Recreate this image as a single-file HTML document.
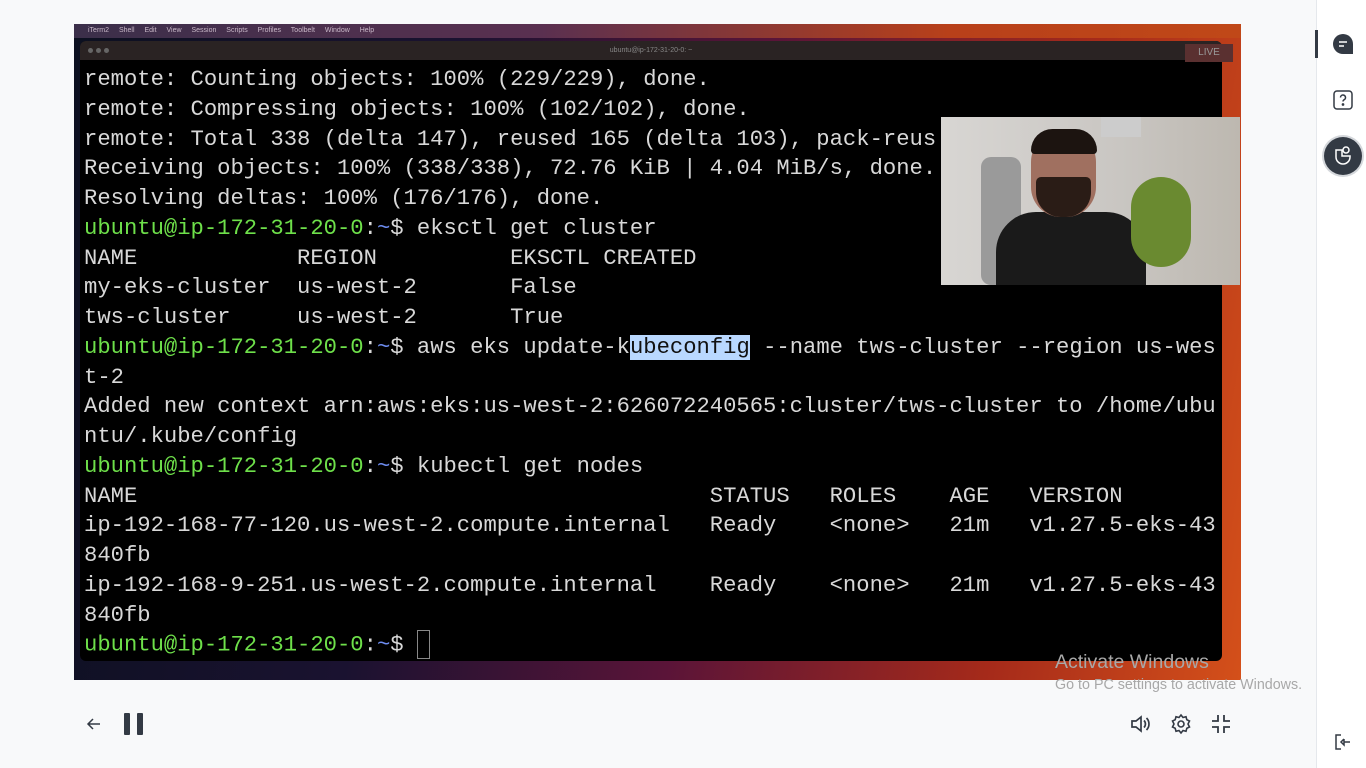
<!DOCTYPE html>
<html><head><meta charset="utf-8"><style>
*{margin:0;padding:0;box-sizing:border-box}
body{width:1366px;height:768px;overflow:hidden;background:#f8f9fa;font-family:"Liberation Sans",sans-serif;position:relative}
#vid{position:absolute;left:74px;top:24px;width:1167px;height:656px;overflow:hidden;
background:linear-gradient(100deg,#0c1020 0%,#1a1230 30%,#5a1438 55%,#a52a1a 80%,#d4501a 100%)}
#menu{position:absolute;left:0;top:0;width:100%;height:14px;background:linear-gradient(90deg,#3b2f4a,#5a3050 40%,#b8401a 75%,#c04818);font-size:7px;color:#c9b8c8;line-height:14px;padding-left:14px;word-spacing:8px}
#term{position:absolute;left:6px;top:17px;width:1142px;height:620px;background:#000;border-radius:6px;overflow:hidden}
#tbar{height:19px;background:#2a2323;color:#888;font-size:7px;text-align:center;line-height:19px}
#tbar i{position:absolute;left:8px;top:7px;width:5px;height:5px;border-radius:50%;background:#666;box-shadow:8px 0 #666,16px 0 #666}
pre{position:absolute;left:4px;top:24px;font-family:"Liberation Mono",monospace;font-size:22.2px;line-height:29.75px;color:#d8d8d8}
.g{color:#6ee04a}.b{color:#6d8cf0}.h{background:#b9d8ff;color:#111}
.cur{display:inline-block;width:13px;height:29px;border:1px solid #888;vertical-align:middle}
#cam{position:absolute;left:867px;top:93px;width:299px;height:168px;background:linear-gradient(90deg,#d8d6d3,#c9c6c2 60%,#bdb8b0);overflow:hidden}
#live{position:absolute;right:8px;top:20px;width:48px;height:18px;background:#5a3030;color:#999;font-size:10px;text-align:center;line-height:18px}
#side{position:absolute;left:1316px;top:0;width:50px;height:768px;background:#fff;border-left:1px solid #e5e8ec}
.aw{position:absolute;color:#a8a8a8;font-family:"Liberation Sans",sans-serif}
</style></head><body>
<div id="vid">
<div id="menu"> iTerm2 Shell Edit View Session Scripts Profiles Toolbelt Window Help</div>
<div id="term"><div id="tbar"><i></i>ubuntu@ip-172-31-20-0: ~</div>
<pre>remote: Counting objects: 100% (229/229), done.
remote: Compressing objects: 100% (102/102), done.
remote: Total 338 (delta 147), reused 165 (delta 103), pack-reus
Receiving objects: 100% (338/338), 72.76 KiB | 4.04 MiB/s, done.
Resolving deltas: 100% (176/176), done.
<span class="g">ubuntu@ip-172-31-20-0</span>:<span class="b">~</span>$ eksctl get cluster
NAME            REGION          EKSCTL CREATED
my-eks-cluster  us-west-2       False
tws-cluster     us-west-2       True
<span class="g">ubuntu@ip-172-31-20-0</span>:<span class="b">~</span>$ aws eks update-k<span class="h">ubeconfig</span> --name tws-cluster --region us-wes
t-2
Added new context arn:aws:eks:us-west-2:626072240565:cluster/tws-cluster to /home/ubu
ntu/.kube/config
<span class="g">ubuntu@ip-172-31-20-0</span>:<span class="b">~</span>$ kubectl get nodes
NAME                                           STATUS   ROLES    AGE   VERSION
ip-192-168-77-120.us-west-2.compute.internal   Ready    &lt;none&gt;   21m   v1.27.5-eks-43
840fb
ip-192-168-9-251.us-west-2.compute.internal    Ready    &lt;none&gt;   21m   v1.27.5-eks-43
840fb
<span class="g">ubuntu@ip-172-31-20-0</span>:<span class="b">~</span>$ <span class="cur"></span></pre>
</div>
<div id="live">LIVE</div>
<div id="cam">
<div style="position:absolute;left:40px;top:40px;width:40px;height:128px;background:#9a9a9a;border-radius:10px"></div>
<div style="position:absolute;left:55px;top:95px;width:150px;height:80px;background:#1a1a1a;border-radius:40px 40px 0 0"></div>
<div style="position:absolute;left:90px;top:15px;width:65px;height:85px;background:#a07060;border-radius:30px"></div>
<div style="position:absolute;left:90px;top:12px;width:66px;height:25px;background:#1c1410;border-radius:30px 30px 5px 5px"></div>
<div style="position:absolute;left:95px;top:60px;width:55px;height:40px;background:#2a1c16;border-radius:5px 5px 25px 25px"></div>
<div style="position:absolute;left:190px;top:60px;width:60px;height:90px;background:#6a8a30;border-radius:30px"></div>
<div style="position:absolute;left:160px;top:0;width:40px;height:20px;background:#ccc"></div>
</div>
</div>
<div class="aw" style="left:1055px;top:651px;font-size:19.5px">Activate Windows</div>
<div class="aw" style="left:1055px;top:677px;font-size:14.3px">Go to PC settings to activate Windows.</div>
<svg style="position:absolute;left:84px;top:714px" width="20" height="20" viewBox="0 0 20 20"><path d="M16 10H4M9 5L4 10L9 15" stroke="#333a44" stroke-width="1.5" fill="none"/></svg>
<div style="position:absolute;left:124px;top:713px;width:6px;height:22px;background:#333a44;border-radius:1px"></div>
<div style="position:absolute;left:137px;top:713px;width:6px;height:22px;background:#333a44;border-radius:1px"></div>
<svg style="position:absolute;left:1129px;top:712px" width="24" height="24" viewBox="0 0 24 24" fill="none" stroke="#333a44" stroke-width="1.7"><path d="M3 9h4l5-4v14l-5-4H3z"/><path d="M15 8.5a5 5 0 0 1 0 7M17.5 6a8.5 8.5 0 0 1 0 12"/></svg>
<svg style="position:absolute;left:1169px;top:712px" width="24" height="24" viewBox="0 0 24 24" fill="none" stroke="#333a44" stroke-width="1.6"><circle cx="12" cy="12" r="3"/><path d="M12 3l2 2.5 3-.8.8 3L20.5 9 19 12l1.5 3-2.7 1.3-.8 3-3-.8L12 21l-2-2.5-3 .8-.8-3L3.5 15 5 12 3.5 9l2.7-1.3.8-3 3 .8z"/></svg>
<svg style="position:absolute;left:1209px;top:712px" width="24" height="24" viewBox="0 0 24 24" fill="none" stroke="#333a44" stroke-width="1.8"><path d="M9 3v6H3M15 3v6h6M9 21v-6H3M15 21v-6h6"/></svg>
<div id="side">
<div style="position:absolute;left:-2px;top:30px;width:3px;height:28px;background:#333a44"></div>
<svg style="position:absolute;left:15px;top:33px" width="22" height="22" viewBox="0 0 22 22"><path d="M11 1a10 10 0 1 0 0 20h10V11A10 10 0 0 0 11 1z" fill="#333a44"/><path d="M7 9h8M7 13h5" stroke="#fff" stroke-width="1.6"/></svg>
<svg style="position:absolute;left:15px;top:89px" width="22" height="22" viewBox="0 0 22 22" fill="none" stroke="#333a44" stroke-width="1.5"><rect x="2" y="2" width="18" height="18" rx="3"/><path d="M8.5 8.5a2.5 2.5 0 1 1 3.5 2.3c-.7.4-1 .9-1 1.7"/><circle cx="11" cy="15.5" r=".6" fill="#333a44"/></svg>
<div style="position:absolute;left:7px;top:137px;width:38px;height:38px;border-radius:50%;background:#333a44;box-shadow:0 0 0 2px #d4d7db"></div>
<svg style="position:absolute;left:14px;top:144px" width="24" height="24" viewBox="0 0 24 24" fill="none" stroke="#fff" stroke-width="1.5"><path d="M5 6v7a7 7 0 0 0 14 0v-1H11V6z"/><circle cx="15" cy="6" r="3"/></svg>
<svg style="position:absolute;left:16px;top:732px" width="20" height="20" viewBox="0 0 20 20" fill="none" stroke="#333a44" stroke-width="1.5"><path d="M8 3H3v14h5"/><path d="M17 10h-6M11 7l-3 3 3 3v-6"/></svg>
</div>
</body></html>
